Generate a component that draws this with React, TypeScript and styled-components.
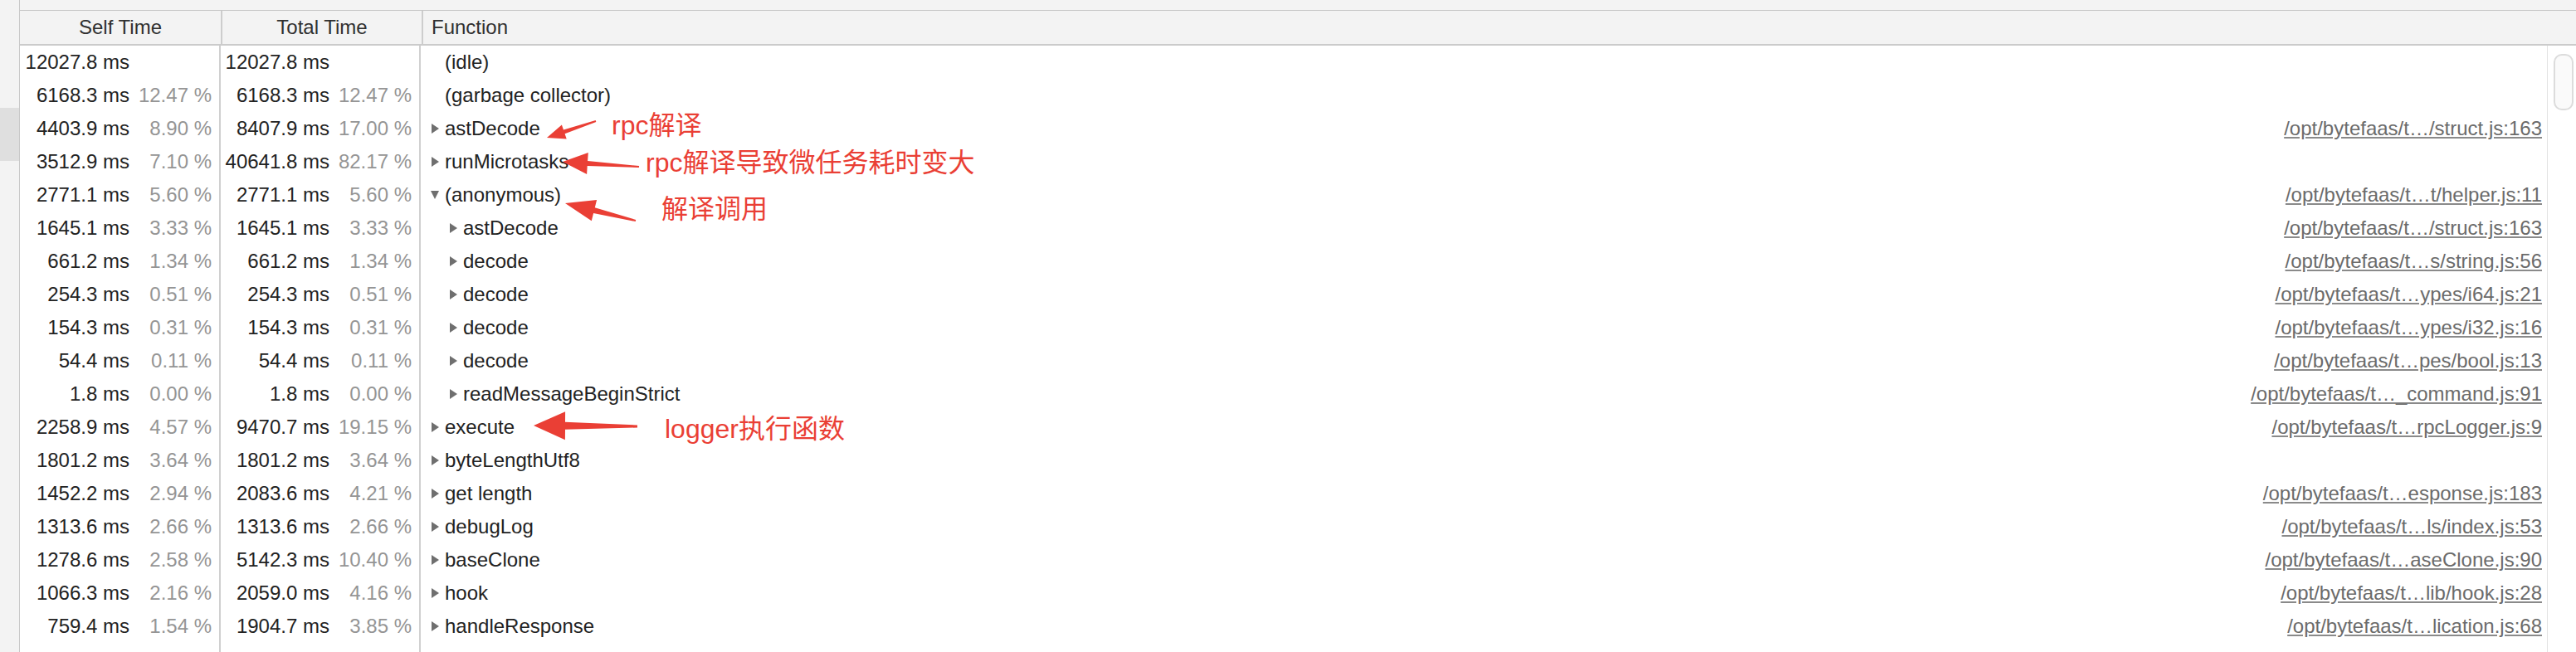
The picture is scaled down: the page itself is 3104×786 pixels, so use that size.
import React from 'react'
import styled, { createGlobalStyle } from 'styled-components'

const GlobalStyle = createGlobalStyle`
  html, body {
    margin: 0;
    padding: 0;
    background: #fff;
  }
  body {
    font-family: "Liberation Sans", Arial, "Noto Sans CJK SC", sans-serif;
  }
`

type Row = {
  self: string
  selfPct?: string
  total: string
  totalPct?: string
  name: string
  depth?: number
  toggle?: 'closed' | 'open'
  url?: string
}

const rows: Row[] = [
  { self: '12027.8 ms', total: '12027.8 ms', name: '(idle)' },
  { self: '6168.3 ms', selfPct: '12.47 %', total: '6168.3 ms', totalPct: '12.47 %', name: '(garbage collector)' },
  { self: '4403.9 ms', selfPct: '8.90 %', total: '8407.9 ms', totalPct: '17.00 %', name: 'astDecode', toggle: 'closed', url: '/opt/bytefaas/t…/struct.js:163' },
  { self: '3512.9 ms', selfPct: '7.10 %', total: '40641.8 ms', totalPct: '82.17 %', name: 'runMicrotasks', toggle: 'closed' },
  { self: '2771.1 ms', selfPct: '5.60 %', total: '2771.1 ms', totalPct: '5.60 %', name: '(anonymous)', toggle: 'open', url: '/opt/bytefaas/t…t/helper.js:11' },
  { self: '1645.1 ms', selfPct: '3.33 %', total: '1645.1 ms', totalPct: '3.33 %', name: 'astDecode', depth: 1, toggle: 'closed', url: '/opt/bytefaas/t…/struct.js:163' },
  { self: '661.2 ms', selfPct: '1.34 %', total: '661.2 ms', totalPct: '1.34 %', name: 'decode', depth: 1, toggle: 'closed', url: '/opt/bytefaas/t…s/string.js:56' },
  { self: '254.3 ms', selfPct: '0.51 %', total: '254.3 ms', totalPct: '0.51 %', name: 'decode', depth: 1, toggle: 'closed', url: '/opt/bytefaas/t…ypes/i64.js:21' },
  { self: '154.3 ms', selfPct: '0.31 %', total: '154.3 ms', totalPct: '0.31 %', name: 'decode', depth: 1, toggle: 'closed', url: '/opt/bytefaas/t…ypes/i32.js:16' },
  { self: '54.4 ms', selfPct: '0.11 %', total: '54.4 ms', totalPct: '0.11 %', name: 'decode', depth: 1, toggle: 'closed', url: '/opt/bytefaas/t…pes/bool.js:13' },
  { self: '1.8 ms', selfPct: '0.00 %', total: '1.8 ms', totalPct: '0.00 %', name: 'readMessageBeginStrict', depth: 1, toggle: 'closed', url: '/opt/bytefaas/t…_command.js:91' },
  { self: '2258.9 ms', selfPct: '4.57 %', total: '9470.7 ms', totalPct: '19.15 %', name: 'execute', toggle: 'closed', url: '/opt/bytefaas/t…rpcLogger.js:9' },
  { self: '1801.2 ms', selfPct: '3.64 %', total: '1801.2 ms', totalPct: '3.64 %', name: 'byteLengthUtf8', toggle: 'closed' },
  { self: '1452.2 ms', selfPct: '2.94 %', total: '2083.6 ms', totalPct: '4.21 %', name: 'get length', toggle: 'closed', url: '/opt/bytefaas/t…esponse.js:183' },
  { self: '1313.6 ms', selfPct: '2.66 %', total: '1313.6 ms', totalPct: '2.66 %', name: 'debugLog', toggle: 'closed', url: '/opt/bytefaas/t…ls/index.js:53' },
  { self: '1278.6 ms', selfPct: '2.58 %', total: '5142.3 ms', totalPct: '10.40 %', name: 'baseClone', toggle: 'closed', url: '/opt/bytefaas/t…aseClone.js:90' },
  { self: '1066.3 ms', selfPct: '2.16 %', total: '2059.0 ms', totalPct: '4.16 %', name: 'hook', toggle: 'closed', url: '/opt/bytefaas/t…lib/hook.js:28' },
  { self: '759.4 ms', selfPct: '1.54 %', total: '1904.7 ms', totalPct: '3.85 %', name: 'handleResponse', toggle: 'closed', url: '/opt/bytefaas/t…lication.js:68' },
]

// red markup drawn on top of the screenshot
const notes = [
  { x: 737, y: 135, text: 'rpc解译' },
  { x: 778, y: 180, text: 'rpc解译导致微任务耗时变大' },
  { x: 797, y: 236, text: '解译调用' },
  { x: 801, y: 501, text: 'logger执行函数' },
]

const arrows = [
  { tail: [718, 146], tip: [659, 166], head: 22, half: 9, tailW: 2, baseW: 5 },
  { tail: [770, 201], tip: [678, 195], head: 30, half: 13, tailW: 2, baseW: 6 },
  { tail: [766, 266], tip: [681, 245], head: 36, half: 13, tailW: 2, baseW: 7 },
  { tail: [768, 514], tip: [643, 513], head: 38, half: 17, tailW: 3, baseW: 9 },
]

const arrowPoints = (a: (typeof arrows)[number]) => {
  const [tx, ty] = a.tail
  const [hx, hy] = a.tip
  const len = Math.hypot(hx - tx, hy - ty)
  const ux = (hx - tx) / len
  const uy = (hy - ty) / len
  const nx = -uy
  const ny = ux
  const bx = hx - ux * a.head
  const by = hy - uy * a.head
  const pts = [
    [tx + (nx * a.tailW) / 2, ty + (ny * a.tailW) / 2],
    [bx + (nx * a.baseW) / 2, by + (ny * a.baseW) / 2],
    [bx + nx * a.half, by + ny * a.half],
    [hx, hy],
    [bx - nx * a.half, by - ny * a.half],
    [bx - (nx * a.baseW) / 2, by - (ny * a.baseW) / 2],
    [tx - (nx * a.tailW) / 2, ty - (ny * a.tailW) / 2],
  ]
  return pts.map((p) => p.map((v) => v.toFixed(1)).join(',')).join(' ')
}

const Page = styled.div`
  position: relative;
  display: flex;
  width: 3104px;
  height: 786px;
  overflow: hidden;
  background: #fff;
  color: #222;
  font-size: 24px;
`

const Gutter = styled.div`
  flex: 0 0 23px;
  border-right: 1px solid #c9c9c9;
  background: linear-gradient(
    to bottom,
    #f3f3f3 0,
    #f3f3f3 130px,
    #dfdfdf 130px,
    #dfdfdf 194px,
    #f3f3f3 194px
  );
`

const Main = styled.div`
  flex: 1;
  min-width: 0;
  display: flex;
  flex-direction: column;
`

const TopBand = styled.div`
  height: 12px;
  background: #f3f3f3;
  border-bottom: 1px solid #c6c6c6;
`

const HeaderRow = styled.div`
  display: grid;
  grid-template-columns: 244px 242px 1fr;
  height: 40px;
  background: #f3f3f3;
  border-bottom: 2px solid #cbcbcb;
`

const HeaderCell = styled.div<{ $align: 'center' | 'left'; $divider?: boolean }>`
  line-height: 40px;
  color: #303030;
  text-align: ${(p) => p.$align};
  padding-left: ${(p) => (p.$align === 'left' ? '10px' : '0')};
  border-right: ${(p) => (p.$divider ? '2px solid #cdcdcd' : 'none')};
  white-space: nowrap;
`

const Body = styled.div`
  flex: 1;
  display: flex;
  min-height: 0;
`

const Table = styled.div`
  flex: 1;
  min-width: 0;
  display: flex;
  flex-direction: column;
`

const GridRow = styled.div<{ $filler?: boolean }>`
  display: grid;
  grid-template-columns: 242px 241px 1fr;
  flex: ${(p) => (p.$filler ? '1' : '0 0 40px')};
  line-height: 40px;
  white-space: nowrap;
`

const TimeCell = styled.div`
  display: flex;
  justify-content: flex-end;
  padding-right: 9px;
  border-right: 2px solid #d0d0d0;
`

const Ms = styled.span`
  text-align: right;
`

const Pct = styled.span`
  width: 99px;
  text-align: right;
  color: #959595;
`

const FunctionCell = styled.div<{ $depth: number }>`
  display: flex;
  align-items: center;
  min-width: 0;
  padding-left: ${(p) => 13 + p.$depth * 22}px;
  padding-right: 6px;
`

const Toggle = styled.span<{ $state?: 'closed' | 'open' }>`
  flex: 0 0 16px;
  display: flex;
  align-items: center;
  height: 40px;

  &::before {
    content: '';
    display: ${(p) => (p.$state ? 'block' : 'none')};
    width: 0;
    height: 0;
    ${(p) =>
      p.$state === 'open'
        ? `
      border-top: 10px solid #6f6f6f;
      border-left: 5.5px solid transparent;
      border-right: 5.5px solid transparent;
      margin-left: -1px;
    `
        : `
      border-left: 9px solid #6f6f6f;
      border-top: 6.5px solid transparent;
      border-bottom: 6.5px solid transparent;
    `}
  }
`

const Name = styled.span`
  color: #222;
`

const Url = styled.span`
  margin-left: auto;
  color: #6b6b6b;
  text-decoration: underline;
  text-decoration-color: #8a8a8a;
`

const ScrollTrack = styled.div`
  flex: 0 0 27px;
  border-left: 1px solid #e2e2e2;
  background: #fff;
  padding: 10px 0 0 7px;
`

const Thumb = styled.div`
  width: 24px;
  height: 68px;
  box-sizing: border-box;
  border-radius: 10px;
  border: 2px solid #dcdcdc;
  background: #fafafa;
`

const Overlay = styled.div`
  position: absolute;
  inset: 0;
  pointer-events: none;
`

const ArrowLayer = styled.svg`
  position: absolute;
  left: 0;
  top: 0;
`

const Note = styled.span<{ $x: number; $y: number }>`
  position: absolute;
  left: ${(p) => p.$x}px;
  top: ${(p) => p.$y}px;
  font-family: "Liberation Sans", "Noto Sans CJK SC", sans-serif;
  font-size: 32px;
  line-height: 32px;
  color: #ea3f35;
  white-space: nowrap;
`

export default function App() {
  return (
    <>
      <GlobalStyle />
      <Page>
        <Gutter />
        <Main>
          <TopBand />
          <HeaderRow>
            <HeaderCell $align="center" $divider>
              Self Time
            </HeaderCell>
            <HeaderCell $align="center" $divider>
              Total Time
            </HeaderCell>
            <HeaderCell $align="left">Function</HeaderCell>
          </HeaderRow>
          <Body>
            <Table>
              {rows.map((r, i) => (
                <GridRow key={i}>
                  <TimeCell>
                    <Ms>{r.self}</Ms>
                    <Pct>{r.selfPct}</Pct>
                  </TimeCell>
                  <TimeCell>
                    <Ms>{r.total}</Ms>
                    <Pct>{r.totalPct}</Pct>
                  </TimeCell>
                  <FunctionCell $depth={r.depth || 0}>
                    <Toggle $state={r.toggle} />
                    <Name>{r.name}</Name>
                    {r.url && <Url>{r.url}</Url>}
                  </FunctionCell>
                </GridRow>
              ))}
              <GridRow $filler>
                <TimeCell />
                <TimeCell />
                <FunctionCell $depth={0} />
              </GridRow>
            </Table>
            <ScrollTrack>
              <Thumb />
            </ScrollTrack>
          </Body>
        </Main>

        <Overlay>
          <ArrowLayer width="3104" height="786" viewBox="0 0 3104 786">
            {arrows.map((a, i) => (
              <polygon key={i} points={arrowPoints(a)} fill="#ea3f35" strokeLinejoin="round" />
            ))}
          </ArrowLayer>
          {notes.map((n) => (
            <Note key={n.text} $x={n.x} $y={n.y}>
              {n.text}
            </Note>
          ))}
        </Overlay>
      </Page>
    </>
  )
}
